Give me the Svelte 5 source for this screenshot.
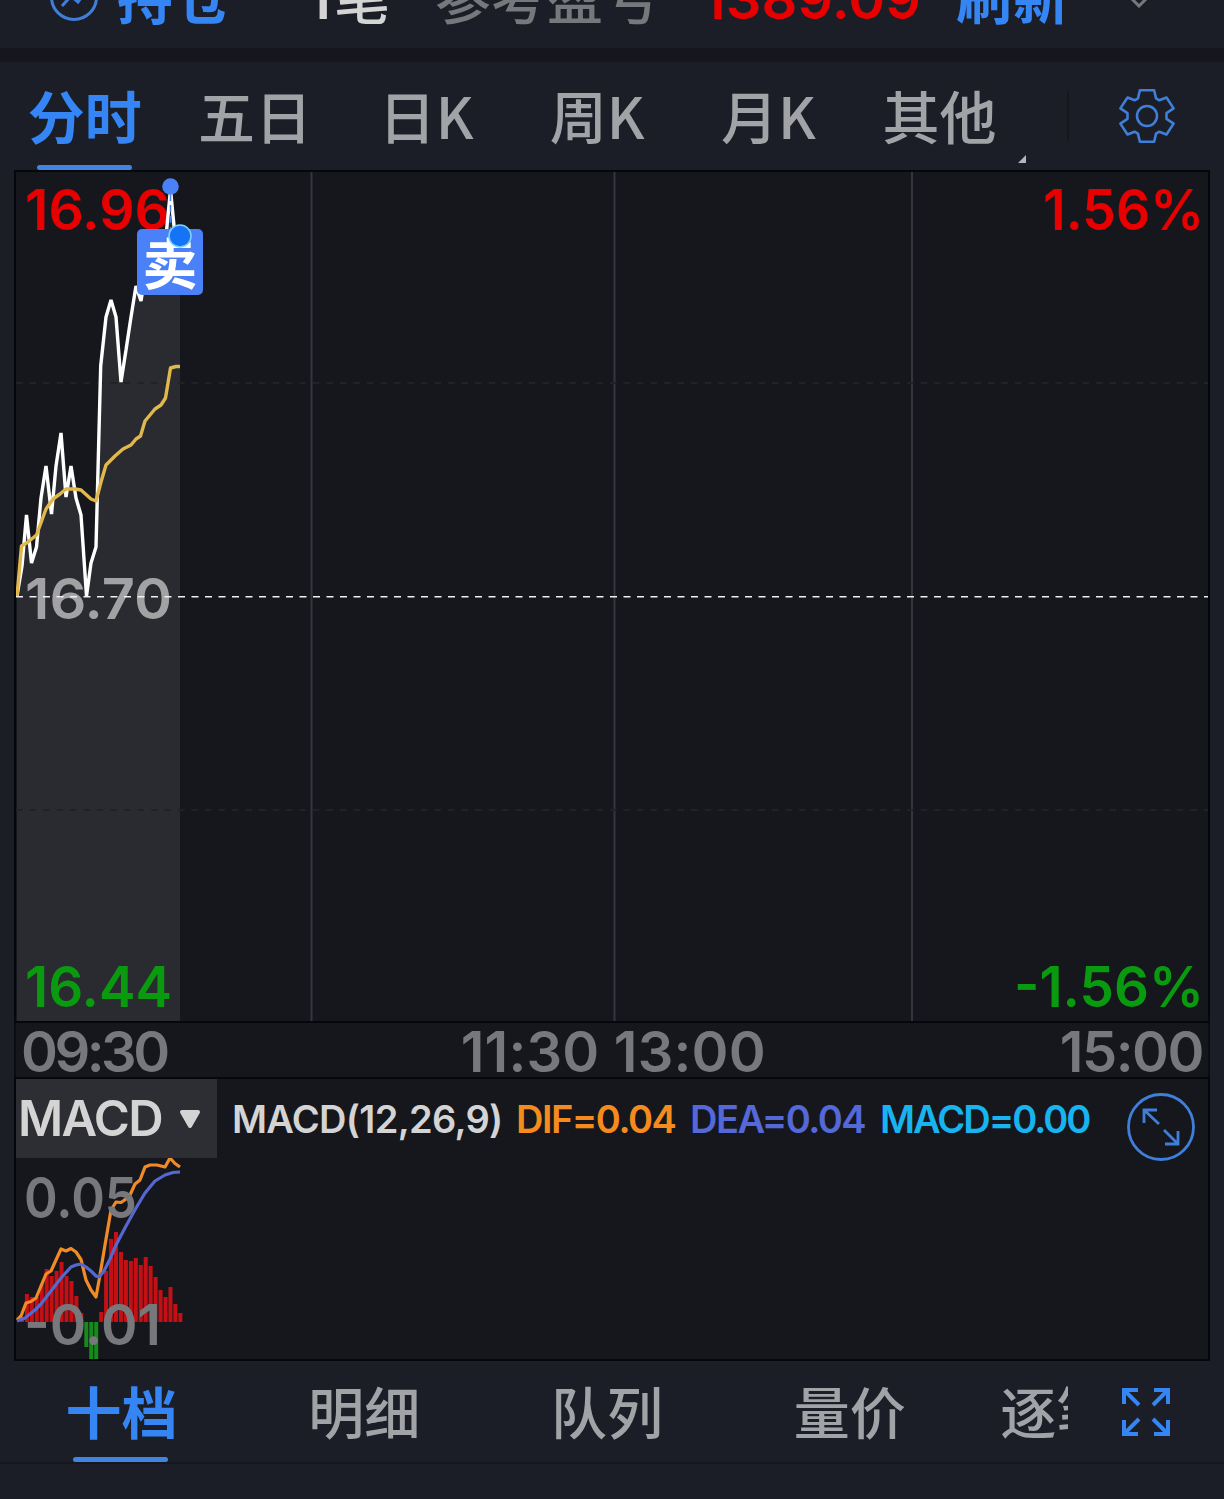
<script>
  const STEP = 4.95;
  const ZERO_Y = 243;

  const periods = ['分时', '五日', '日K', '周K', '月K', '其他'];
  const detailTabs = ['十档', '明细', '队列', '量价', '逐笔'];
  let period = $state('分时');
  let detail = $state('十档');

  // 分时价格线
  const price = [
    [1, 424], [6, 394], [10.5, 343], [15.5, 391], [20.5, 375], [25, 326], [30, 294], [35.5, 342],
    [40, 294], [45, 261], [50, 325], [55, 294], [60, 326], [65, 343], [70.5, 424], [75, 391],
    [80, 375], [84.7, 194], [90, 145], [95, 128], [100, 145], [105, 210], [110, 178], [115, 145],
    [120, 114], [125, 129], [130, 97], [135, 97], [140, 80], [145, 80], [150, 64], [154.5, 18],
    [159, 64], [164, 64]
  ];

  // 均价线
  const average = [
    [1, 424], [5.5, 374], [12, 370], [20.5, 363], [30, 337], [37, 327], [44, 322], [50, 317],
    [59, 317], [65, 318], [75, 327], [80, 329], [85, 310], [90, 293], [99, 284], [107, 277],
    [115, 273], [120, 267], [124.5, 264], [129, 249], [139, 237], [145, 233], [149.5, 226],
    [154.5, 196], [160, 194.5], [164, 194.5]
  ];

  const dif = [
    [1, 241], [5, 237], [10, 224], [15, 222.5], [20, 219], [25, 207], [30, 195], [35, 192],
    [40, 181], [45, 170], [50, 172], [55, 169.5], [60, 173], [65, 180.5], [70, 201], [75, 211],
    [80, 218], [84, 196], [89, 166], [95, 131], [100, 123], [105, 123.5], [110, 120], [114, 116],
    [119, 105], [124, 101], [129, 88], [134, 86], [141, 86], [149, 88], [154, 79], [159, 84.5], [164, 88]
  ];

  const dea = [
    [1, 242], [9, 239], [19, 231], [25, 225], [35, 212], [45, 199], [55, 188], [60, 186],
    [65, 185], [70, 188], [75, 192], [80, 197], [83, 198], [88, 192], [94, 180], [100, 166],
    [110, 147], [120, 129], [129, 114], [139, 102], [149, 96], [157, 93.5], [164, 93]
  ];

  // 柱高，负值画在零轴下方
  const bars = [
    0, 5, 28, 25, 25, 38, 53, 46, 51, 60, 46, 41, 26, 9, -25, -37, -37,
    10, 51, 83, 90, 70, 62, 61, 64, 57, 65, 56, 45, 32, 25, 35, 18, 9
  ];

  const line = (points) => points.map((p) => p.join(',')).join(' ');
</script>

<div class="page">
  <header class="position">
    <svg class="trend" width="48" height="48" viewBox="0 0 48 48">
      <circle cx="24" cy="24" r="22.5" />
      <path d="M12 33 L21 23 L28 29 L36 18" />
    </svg>
    <span class="blue hold">持仓</span>
    <span class="count"><b>1</b>笔</span>
    <span class="muted">参考盈亏</span>
    <span class="profit">1389.09</span>
    <span class="blue refresh">刷新</span>
    <svg class="chevron" width="24" height="14" viewBox="0 0 24 14">
      <path d="M2 2 L12 12 L22 2" />
    </svg>
  </header>

  <nav class="periods">
    {#each periods as name}
      <button class:active={period === name} onclick={() => (period = name)}>{name}</button>
    {/each}
    <i class="corner"></i>
    <div class="settings">
      <svg width="58" height="58" viewBox="-30.5 -30.5 61 61">
        <path d="M-7.5 -27 H7.5 L9.5 -18.5 L13 -16.5 L20.5 -19.5 L28 -8 L20.5 -3 V3 L28 8 L20.5 19.5 L13 16.5 L9.5 18.5 L7.5 27 H-7.5 L-9.5 18.5 L-13 16.5 L-20.5 19.5 L-28 8 L-20.5 3 V-3 L-28 -8 L-20.5 -19.5 L-13 -16.5 L-9.5 -18.5 Z" />
        <circle r="10.5" />
      </svg>
    </div>
  </nav>

  <section class="panel chart">
    <svg width="1192" height="849" viewBox="0 0 1192 849">
      <polygon class="area" points="1,849 {line(price)} 164,849" />
      <g class="grid">
        <path d="M295.5 0 V849 M598.5 0 V849 M896 0 V849" />
        <path class="faint" d="M0 211 H1192 M0 638 H1192" />
      </g>
      <g class="labels">
        <text x="9" y="58" class="up" textLength="145" lengthAdjust="spacingAndGlyphs">16.96</text>
        <text x="9" y="447" class="flat" textLength="147" lengthAdjust="spacingAndGlyphs">16.70</text>
        <text x="9" y="835" class="down" textLength="147" lengthAdjust="spacingAndGlyphs">16.44</text>
        <text x="1027" y="58" class="up" textLength="161" lengthAdjust="spacingAndGlyphs">1.56%</text>
        <text x="998" y="835" class="down" textLength="190" lengthAdjust="spacingAndGlyphs">-1.56%</text>
      </g>
      <path class="base" d="M0 424.7 H1192" />
      <polyline class="price" points={line(price)} />
      <polyline class="average" points={line(average)} />
      <path class="stem" d="M154.5 22 V60" />
      <circle class="dot" cx="154.5" cy="14.5" r="8.3" />
      <rect class="sell" x="121" y="57" width="66" height="66" rx="5" />
      <text class="sell-text" x="154" y="112" text-anchor="middle">卖</text>
      <circle class="now" cx="164" cy="64" r="11" />
    </svg>
  </section>

  <div class="times">
    <span class="open">09:30</span>
    <span class="noon">11:30 13:00</span>
    <span class="close">15:00</span>
  </div>

  <section class="panel macd">
    <svg class="plot" width="1192" height="280" viewBox="0 0 1192 280">
      {#each bars as h, i}
        <rect
          class={h < 0 ? 'bar-down' : 'bar-up'}
          x={i * STEP - 1}
          y={h < 0 ? ZERO_Y : ZERO_Y - h}
          width="4"
          height={Math.abs(h)}
        />
      {/each}
      <polyline class="dif" points={line(dif)} />
      <polyline class="dea" points={line(dea)} />
      <g class="labels dim">
        <text x="8" y="139" textLength="113" lengthAdjust="spacingAndGlyphs">0.05</text>
        <text x="8" y="266" textLength="137" lengthAdjust="spacingAndGlyphs">-0.01</text>
      </g>
    </svg>
    <div class="legend">
      <button class="indicator">
        <span>MACD</span>
        <svg width="22" height="19" viewBox="0 0 22 19">
          <path d="M3 2 H19 L11 16 Z" />
        </svg>
      </button>
      <span class="params">MACD(12,26,9)</span>
      <span class="dif-value">DIF=0.04</span>
      <span class="dea-value">DEA=0.04</span>
      <span class="macd-value">MACD=0.00</span>
      <svg class="expand" width="70" height="70" viewBox="-35 -35 70 70">
        <circle r="32.5" />
        <path d="M-2 -3 L-17 -17 M-17 -4 V-17 H-4 M3 3 L17 17 M4 17 H17 V4" />
      </svg>
    </div>
  </section>

  <nav class="details">
    <div class="strip">
      {#each detailTabs as name}
        <button class:active={detail === name} onclick={() => (detail = name)}>{name}</button>
      {/each}
    </div>
    <svg class="full" width="50" height="50" viewBox="-25 -25 50 50">
      <path d="M-7 -7 L-21 -21 M-22 -8 V-22 H-8 M7 -7 L21 -21 M22 -8 V-22 H8 M-7 7 L-21 21 M-22 8 V22 H-8 M7 7 L21 21 M22 8 V22 H8" />
    </svg>
  </nav>
</div>

<style>
  :global(body) {
    background: #1b1e27;
  }

  .page {
    width: 1224px;
    height: 1499px;
    overflow: hidden;
    background: #1b1e27;
    font-family: 'Noto Sans CJK SC', sans-serif;
    font-size: 56px;
    font-weight: 500;
    line-height: 56px;
    color: #a2a3a7;
  }

  svg {
    display: block;
    flex: none;
    fill: none;
  }

  button {
    border: 0;
    padding: 0;
    background: none;
    font: inherit;
    color: inherit;
  }

  .position {
    display: flex;
    align-items: flex-end;
    box-sizing: border-box;
    height: 48px;
    padding: 0 0 25px 50px;
    overflow: hidden;
    white-space: nowrap;
  }

  .trend {
    margin-bottom: 2px;
    stroke: #3f7fd9;
    stroke-width: 3;
  }

  .blue {
    color: #3585f5;
    font-weight: 700;
  }

  .hold {
    width: 112px;
    margin-left: 19px;
    letter-spacing: 2px;
  }

  .count {
    width: 84px;
    margin-left: 77px;
    color: #d4d4d5;
    text-align: right;
  }

  .count b {
    margin-right: 3px;
    font-family: Inter, sans-serif;
    font-weight: 600;
    line-height: 0;
  }

  .muted {
    margin-left: 45px;
    color: #77787c;
  }

  .profit {
    width: 216px;
    margin: 0 0 -4px 43px;
    font-family: Inter, sans-serif;
    font-weight: 600;
    letter-spacing: 0.1px;
    color: #e80000;
  }

  .refresh {
    margin-left: 38px;
    letter-spacing: 1px;
  }

  .chevron {
    margin: 0 0 15px 57px;
    stroke: #77787c;
    stroke-width: 3;
  }

  .periods {
    display: flex;
    position: relative;
    height: 108px;
    border-top: 14px solid #16171c;
  }

  .periods button {
    flex: none;
    position: relative;
    width: 171.1px;
    padding-bottom: 5px;
    font-size: 57px;
  }

  .periods button:first-child {
    width: 169.5px;
  }

  button.active {
    color: #3585f5;
    font-weight: 700;
  }

  button.active::after {
    content: '';
    position: absolute;
    left: 50%;
    bottom: 0;
    width: 95px;
    height: 5px;
    margin-left: -48px;
    border-radius: 3px;
    background: #4284e2;
  }

  .corner {
    position: absolute;
    left: 1018px;
    top: 93px;
    border-left: 8px solid transparent;
    border-bottom: 8px solid #b5b6b9;
  }

  .settings {
    display: flex;
    align-items: center;
    height: 50px;
    margin: 29px 0 0 42px;
    padding-left: 49px;
    border-left: 2px solid #16171d;
  }

  .settings svg {
    stroke: #3f7fd9;
    stroke-width: 2.7;
    stroke-linejoin: round;
  }

  .panel {
    margin: 0 14px;
    border: 2px solid #06070d;
    background: #16171c;
  }

  .chart {
    height: 849px;
  }

  .labels {
    font-family: Inter, sans-serif;
    font-size: 56px;
    font-weight: 600;
  }

  .up {
    fill: #e80000;
  }

  .flat {
    fill: #a2a2a5;
  }

  .down {
    fill: #0a9a10;
  }

  .dim {
    fill: #77787c;
  }

  .area {
    fill: #2a2b30;
  }

  .grid path {
    stroke: #33353f;
    stroke-width: 2;
  }

  .grid .faint {
    stroke: #212226;
    stroke-dasharray: 6.5 7;
  }

  .base {
    stroke: #f0f0f0;
    stroke-width: 1.6;
    stroke-dasharray: 7 6.5;
  }

  .price {
    stroke: #fff;
    stroke-width: 3.4;
    stroke-linejoin: bevel;
  }

  .average {
    stroke: #e0b84c;
    stroke-width: 3.4;
    stroke-linejoin: round;
  }

  .stem {
    stroke: #4a80f5;
    stroke-width: 1.5;
    stroke-dasharray: 7 4;
  }

  .dot,
  .sell {
    fill: #4a80f8;
  }

  .sell-text {
    font-size: 55px;
    font-weight: 700;
    fill: #fff;
  }

  .now {
    fill: #1474f5;
    stroke: #7cd0ff;
    stroke-width: 1.6;
  }

  .times {
    display: flex;
    justify-content: space-between;
    height: 54px;
    margin: 0 14px;
    padding: 0 5px;
    border: solid #0b0c12;
    border-width: 0 2px;
    background: #16171c;
    font-family: Inter, sans-serif;
    font-weight: 600;
    line-height: 58px;
    color: #77787c;
  }

  .open {
    letter-spacing: -3.5px;
  }

  .noon {
    letter-spacing: 0.2px;
  }

  .close {
    letter-spacing: -1.5px;
  }

  .macd {
    position: relative;
    height: 280px;
  }

  .legend {
    display: flex;
    position: absolute;
    top: 0;
    left: 0;
    right: 0;
    height: 79px;
    font-family: Inter, sans-serif;
    font-size: 38px;
    font-weight: 600;
    line-height: 81px;
    color: #d4d4d5;
    white-space: nowrap;
  }

  .indicator {
    display: flex;
    align-items: center;
    justify-content: space-between;
    width: 201px;
    margin-right: 15px;
    padding: 0 16px 0 2px;
    box-sizing: border-box;
    background: #2d2e33;
    font-size: 49px;
    line-height: 81px;
    letter-spacing: -1.6px;
  }

  .indicator svg {
    margin-top: 2px;
  }

  .indicator path {
    fill: #d4d4d5;
    stroke: #d4d4d5;
    stroke-width: 4;
    stroke-linejoin: round;
  }

  .params {
    width: 284px;
    letter-spacing: -0.7px;
  }

  .dif-value {
    width: 174px;
    color: #f58b1f;
    letter-spacing: -1.5px;
  }

  .dea-value {
    width: 190px;
    color: #5468d8;
    letter-spacing: -1.5px;
  }

  .macd-value {
    width: 246px;
    color: #18b4f0;
    letter-spacing: -2px;
  }

  .expand {
    margin-top: 13px;
    stroke: #3f7fd9;
    stroke-width: 2.8;
  }

  .dif,
  .dea {
    stroke: #f08b28;
    stroke-width: 3.2;
    stroke-linejoin: round;
  }

  .dea {
    stroke: #5468d0;
  }

  .bar-up {
    fill: #c41014;
  }

  .bar-down {
    fill: #168a1c;
  }

  .details {
    display: flex;
    height: 101px;
    border-bottom: 2px solid #16171e;
  }

  .strip {
    display: flex;
    width: 1068px;
    overflow: hidden;
  }

  .strip button {
    flex: none;
    position: relative;
    width: 242.8px;
    padding-bottom: 4px;
  }

  .strip button:last-child {
    padding-left: 29px;
    text-align: left;
  }

  .full {
    margin: 26px 0 0 53px;
    stroke: #3585f5;
    stroke-width: 4;
  }
</style>
